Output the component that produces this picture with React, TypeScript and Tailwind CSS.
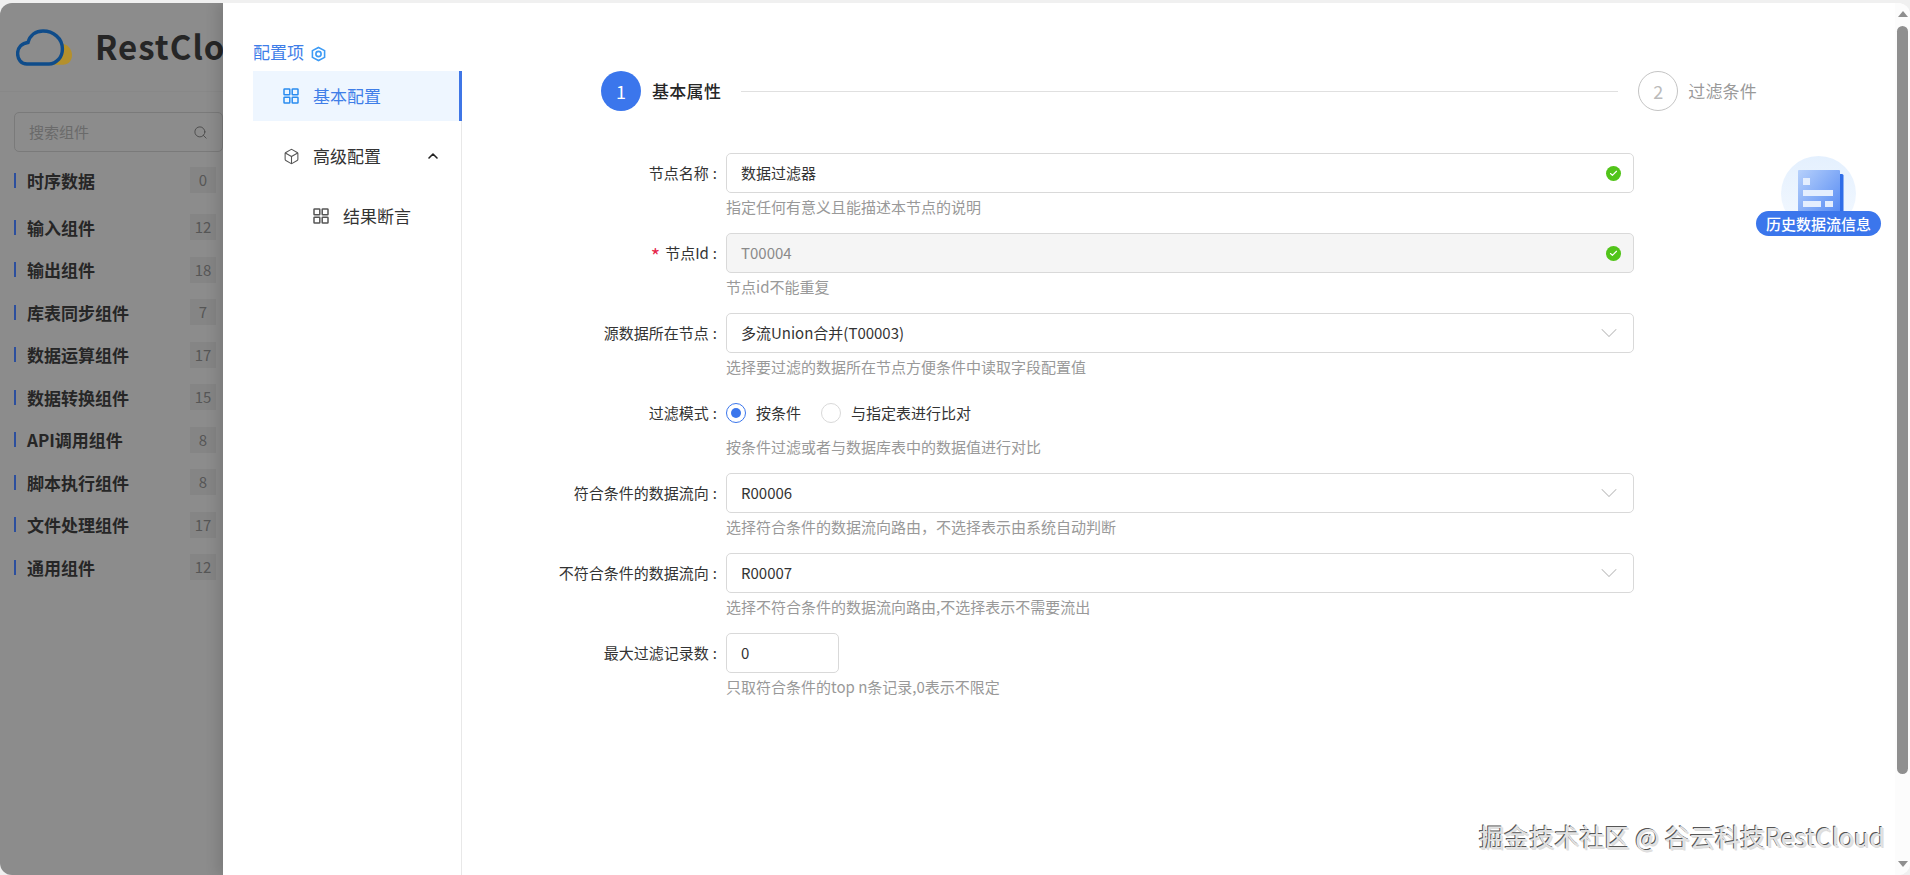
import React from "react";
import { Box, ChevronUp, ChevronDown, Search, Check } from "lucide-react";

const FONT = "[font-family:'Noto_Sans_CJK_SC','Noto_Sans',sans-serif]";

const groups = [
  { name: "时序数据", n: 0, first: true },
  { name: "输入组件", n: 12 },
  { name: "输出组件", n: 18 },
  { name: "库表同步组件", n: 7 },
  { name: "数据运算组件", n: 17 },
  { name: "数据转换组件", n: 15 },
  { name: "API调用组件", n: 8 },
  { name: "脚本执行组件", n: 8 },
  { name: "文件处理组件", n: 17 },
  { name: "通用组件", n: 12 },
];

function GridIcon({ className }: { className: string }) {
  return (
    <svg viewBox="0 0 16 16" className={className} fill="none" stroke="currentColor" strokeWidth="1.5">
      <rect x="1" y="1" width="5.8" height="5.8" rx="0.6" />
      <rect x="9.2" y="1" width="5.8" height="5.8" rx="0.6" />
      <rect x="1" y="9.2" width="5.8" height="5.8" rx="0.6" />
      <rect x="9.2" y="9.2" width="5.8" height="5.8" rx="0.6" />
    </svg>
  );
}

function Logo() {
  return (
    <svg viewBox="0 0 56 37" className="w-[56px] h-[37px] shrink-0">
      <path d="M43 14.5 C50.5 13.5 56 19.5 56 26 C56 32 52 35.8 47 35.8 L28 35.8 Z" fill="#b4902c" />
      <path
        d="M11 35 C5 35 1.6 30 1.6 24.5 C1.6 18.5 6 14 12 13.5 C14 6 20 2 27 2 C37 2 46.4 9 46.4 20 C46.4 24 45.5 27 43 30 C40 33 37 35 33 35 Z"
        fill="#8c8c8c"
        stroke="#0f4c8a"
        strokeWidth="3.4"
      />
    </svg>
  );
}

function HexIcon() {
  return (
    <svg viewBox="0 0 16 16" className="w-[15px] h-[16px] ml-[7px] mt-[3px] text-[#3d9bf5]" fill="none" stroke="currentColor" strokeWidth="1.7">
      <path d="M8 1 L14.5 4.4 V11.6 L8 15 L1.5 11.6 V4.4 Z" />
      <circle cx="8" cy="8" r="2.8" />
    </svg>
  );
}

function DocBadge() {
  return (
    <div className="absolute left-[1756px] top-[153px] w-[125px] h-[80px]">
      <svg viewBox="0 0 125 80" className="absolute left-0 top-0 w-[125px] h-[80px]">
        <defs>
          <linearGradient id="bubble" x1="0" y1="0" x2="0" y2="1">
            <stop offset="0" stopColor="#e4f0fe" />
            <stop offset="1" stopColor="#f4f9ff" />
          </linearGradient>
          <linearGradient id="sheet" x1="0" y1="0" x2="1" y2="1">
            <stop offset="0" stopColor="#b6d0fb" />
            <stop offset="1" stopColor="#4f86f3" />
          </linearGradient>
        </defs>
        <circle cx="62.5" cy="37.5" r="37.5" fill="url(#bubble)" />
        <rect x="81" y="18" width="6.5" height="47" rx="1.5" fill="#2f6de8" />
        <rect x="42" y="14" width="42" height="50" rx="1" fill="url(#sheet)" />
        <rect x="47" y="22" width="7" height="7" fill="#e4eefe" />
        <rect x="47" y="34" width="30" height="6" fill="#e4eefe" />
        <rect x="47" y="45" width="18" height="6" fill="#e4eefe" />
        <rect x="69" y="45" width="8" height="6" fill="#e4eefe" />
      </svg>
      <div className="absolute left-0 top-[55px] w-[125px] h-[25px] rounded-full bg-[#3b76ec] text-white text-[15px] leading-[25px] text-center font-medium">
        历史数据流信息
      </div>
    </div>
  );
}

function OkIcon() {
  return (
    <span className="w-[15px] h-[15px] rounded-full bg-[#52c41a] flex items-center justify-center shrink-0">
      <Check className="w-[9px] h-[9px] text-white" strokeWidth={3} />
    </span>
  );
}

function Field({
  label,
  required,
  help,
  children,
}: {
  label: string;
  required?: boolean;
  help: string;
  children: React.ReactNode;
}) {
  return (
    <div className="flex h-[80px]">
      <div className="w-[197px] h-[40px] flex items-center justify-end text-[15px] text-[#333]">
        {required && <span className="text-[#e5264a] mr-[5px] text-[20px] leading-none mt-[6px]">*</span>}
        {label}
        <span className="ml-[4px]">:</span>
      </div>
      <div className="ml-[9px] flex-1 min-w-0">
        <div className="h-[40px]">{children}</div>
        <div className="h-[28px] leading-[28px] text-[15px] text-[#999]">{help}</div>
      </div>
    </div>
  );
}

function TextBox({ value, disabled, ok, chevron, narrow }: { value: string; disabled?: boolean; ok?: boolean; chevron?: boolean; narrow?: boolean }) {
  return (
    <div
      className={
        "h-[40px] rounded-[5px] border border-[#d9d9d9] pl-[14px] flex items-center justify-between text-[15px] " +
        (disabled ? "bg-[#f5f5f5] text-[#8a8a8a] " : "bg-white text-[#333] ") +
        (narrow ? "w-[113px] " : "w-full ") +
        (chevron ? "pr-[10px]" : "pr-[12px]")
      }
    >
      <span>{value}</span>
      {ok && <OkIcon />}
      {chevron && <ChevronDown className="w-[28px] h-[28px] text-[#bdbdbd]" strokeWidth={0.9} />}
    </div>
  );
}

export default function App() {
  return (
    <div className={"w-[1910px] h-[875px] overflow-hidden bg-[#f0f0f0] pt-[3px] " + FONT}>
      <div className="relative h-[872px] flex rounded-[12px] overflow-hidden">
        {/* dimmed page behind the drawer */}
        <div className="w-[223px] shrink-0 bg-[#8c8c8c] overflow-hidden">
          <div className="h-[89px] flex items-center pl-[16px] border-b border-[#888888]">
            <Logo />
            <span className="ml-[23px] text-[33px] font-bold text-[#262626] whitespace-nowrap tracking-[1px]">RestCloud</span>
          </div>
          <div className="ml-[14px] mt-[20px] h-[40px] w-[209px] rounded-[5px] border border-[#7a7a7a] flex items-center justify-between pl-[14px] pr-[14px] text-[15px] text-[#6a6a6a]">
            <span>搜索组件</span>
            <Search className="w-[15px] h-[15px] text-[#4c4c4c]" strokeWidth={1.5} />
          </div>
          <div className="mt-[7px] pl-[14px]">
            {groups.map((g) => (
              <div key={g.name} className={"h-[42.5px] flex items-center " + (g.first ? "mb-[4.5px]" : "")}>
                <span className="w-[2px] h-[15px] bg-[#2c4f9e] shrink-0" />
                <span className="ml-[11px] flex-1 text-[17px] font-bold text-[#262626] whitespace-nowrap">{g.name}</span>
                <span className="w-[26px] h-[26px] mr-[7px] bg-[#858585] text-[#565656] text-[15px] leading-[26px] text-center">{g.n}</span>
              </div>
            ))}
          </div>
        </div>

        {/* drawer */}
        <div className="flex-1 min-w-0 bg-white flex shadow-[-6px_0_12px_rgba(0,0,0,0.12)]">
          <div className="w-[239px] shrink-0 pl-[30px] pt-[34px]">
            <div className="h-[30px] flex items-center text-[17px] text-[#3f7ee8]">
              配置项
              <HexIcon />
            </div>
            <div className="border-r border-[#e8e8e8] h-[806px]">
              <div className="h-[50px] mt-[4px] bg-[#eef6ff] border-r-[3px] border-[#3f76e6] mr-[-1px] pl-[30px] flex items-center text-[17px] text-[#3f7ee8]">
                <GridIcon className="w-[16px] h-[16px] text-[#2a8cf0] mr-[14px]" />
                基本配置
              </div>
              <div className="h-[50px] mt-[10px] pl-[30px] pr-[20px] flex items-center text-[17px] text-[#333]">
                <Box className="w-[17px] h-[17px] text-[#555] mr-[13px]" strokeWidth={1.5} />
                <span className="flex-1">高级配置</span>
                <ChevronUp className="w-[16px] h-[16px] text-[#222]" strokeWidth={2.4} />
              </div>
              <div className="h-[50px] mt-[10px] pl-[60px] flex items-center text-[17px] text-[#333]">
                <GridIcon className="w-[16px] h-[16px] text-[#555] mr-[14px]" />
                结果断言
              </div>
            </div>
          </div>

          <div className="flex-1 min-w-0">
            <div className="h-[40px] mt-[68px] ml-[139px] mr-[138px] flex items-center">
              <span className="w-[40px] h-[40px] rounded-full bg-[#3b76ec] text-white text-[18px] flex items-center justify-center shrink-0">1</span>
              <span className="ml-[11px] text-[17px] tracking-[0.3px] font-medium text-[#262626]">基本属性</span>
              <span className="flex-1 h-px bg-[#e0e0e0] mx-[20px]" />
              <span className="w-[40px] h-[40px] rounded-full border border-[#c4c4c4] text-[#bbb] text-[18px] flex items-center justify-center shrink-0">2</span>
              <span className="ml-[10px] text-[17px] tracking-[0.2px] text-[#999]">过滤条件</span>
            </div>
            <div className="mt-[42px] ml-[58px] mr-[261px]">
              <Field label="节点名称" help="指定任何有意义且能描述本节点的说明">
                <TextBox value="数据过滤器" ok />
              </Field>
              <Field label="节点Id" required help="节点id不能重复">
                <TextBox value="T00004" disabled ok />
              </Field>
              <Field label="源数据所在节点" help="选择要过滤的数据所在节点方便条件中读取字段配置值">
                <TextBox value="多流Union合并(T00003)" chevron />
              </Field>
              <Field label="过滤模式" help="按条件过滤或者与数据库表中的数据值进行对比">
                <div className="h-[40px] flex items-center text-[15px] text-[#333]">
                  <span className="w-[20px] h-[20px] rounded-full border border-[#3b76ec] flex items-center justify-center">
                    <span className="w-[10px] h-[10px] rounded-full bg-[#3b76ec]" />
                  </span>
                  <span className="ml-[10px]">按条件</span>
                  <span className="ml-[20px] w-[20px] h-[20px] rounded-full border border-[#d9d9d9]" />
                  <span className="ml-[10px]">与指定表进行比对</span>
                </div>
              </Field>
              <Field label="符合条件的数据流向" help="选择符合条件的数据流向路由，不选择表示由系统自动判断">
                <TextBox value="R00006" chevron />
              </Field>
              <Field label="不符合条件的数据流向" help="选择不符合条件的数据流向路由,不选择表示不需要流出">
                <TextBox value="R00007" chevron />
              </Field>
              <Field label="最大过滤记录数" help="只取符合条件的top n条记录,0表示不限定">
                <TextBox value="0" narrow />
              </Field>
            </div>
          </div>

          <div className="w-[15px] shrink-0 flex flex-col items-center bg-[#fcfcfc] pt-[8px] pb-[8px]">
            <span className="w-0 h-0 border-x-[5px] border-x-transparent border-b-[6px] border-b-[#8f8f8f]" />
            <span className="w-[11px] h-[748px] mt-[9px] rounded-full bg-[#8f8f8f]" />
            <span className="mt-auto w-0 h-0 border-x-[5px] border-x-transparent border-t-[6px] border-t-[#8f8f8f]" />
          </div>
        </div>

        <DocBadge />
        <div className="absolute left-[1479px] top-[817px] text-[25px] leading-[32px] tracking-[0.1px] text-[#e2e2e2] whitespace-nowrap [text-shadow:-1px_-1px_0_#555,1px_1px_0_#ddd]">
          掘金技术社区 @ 谷云科技RestCloud
        </div>
      </div>
    </div>
  );
}
